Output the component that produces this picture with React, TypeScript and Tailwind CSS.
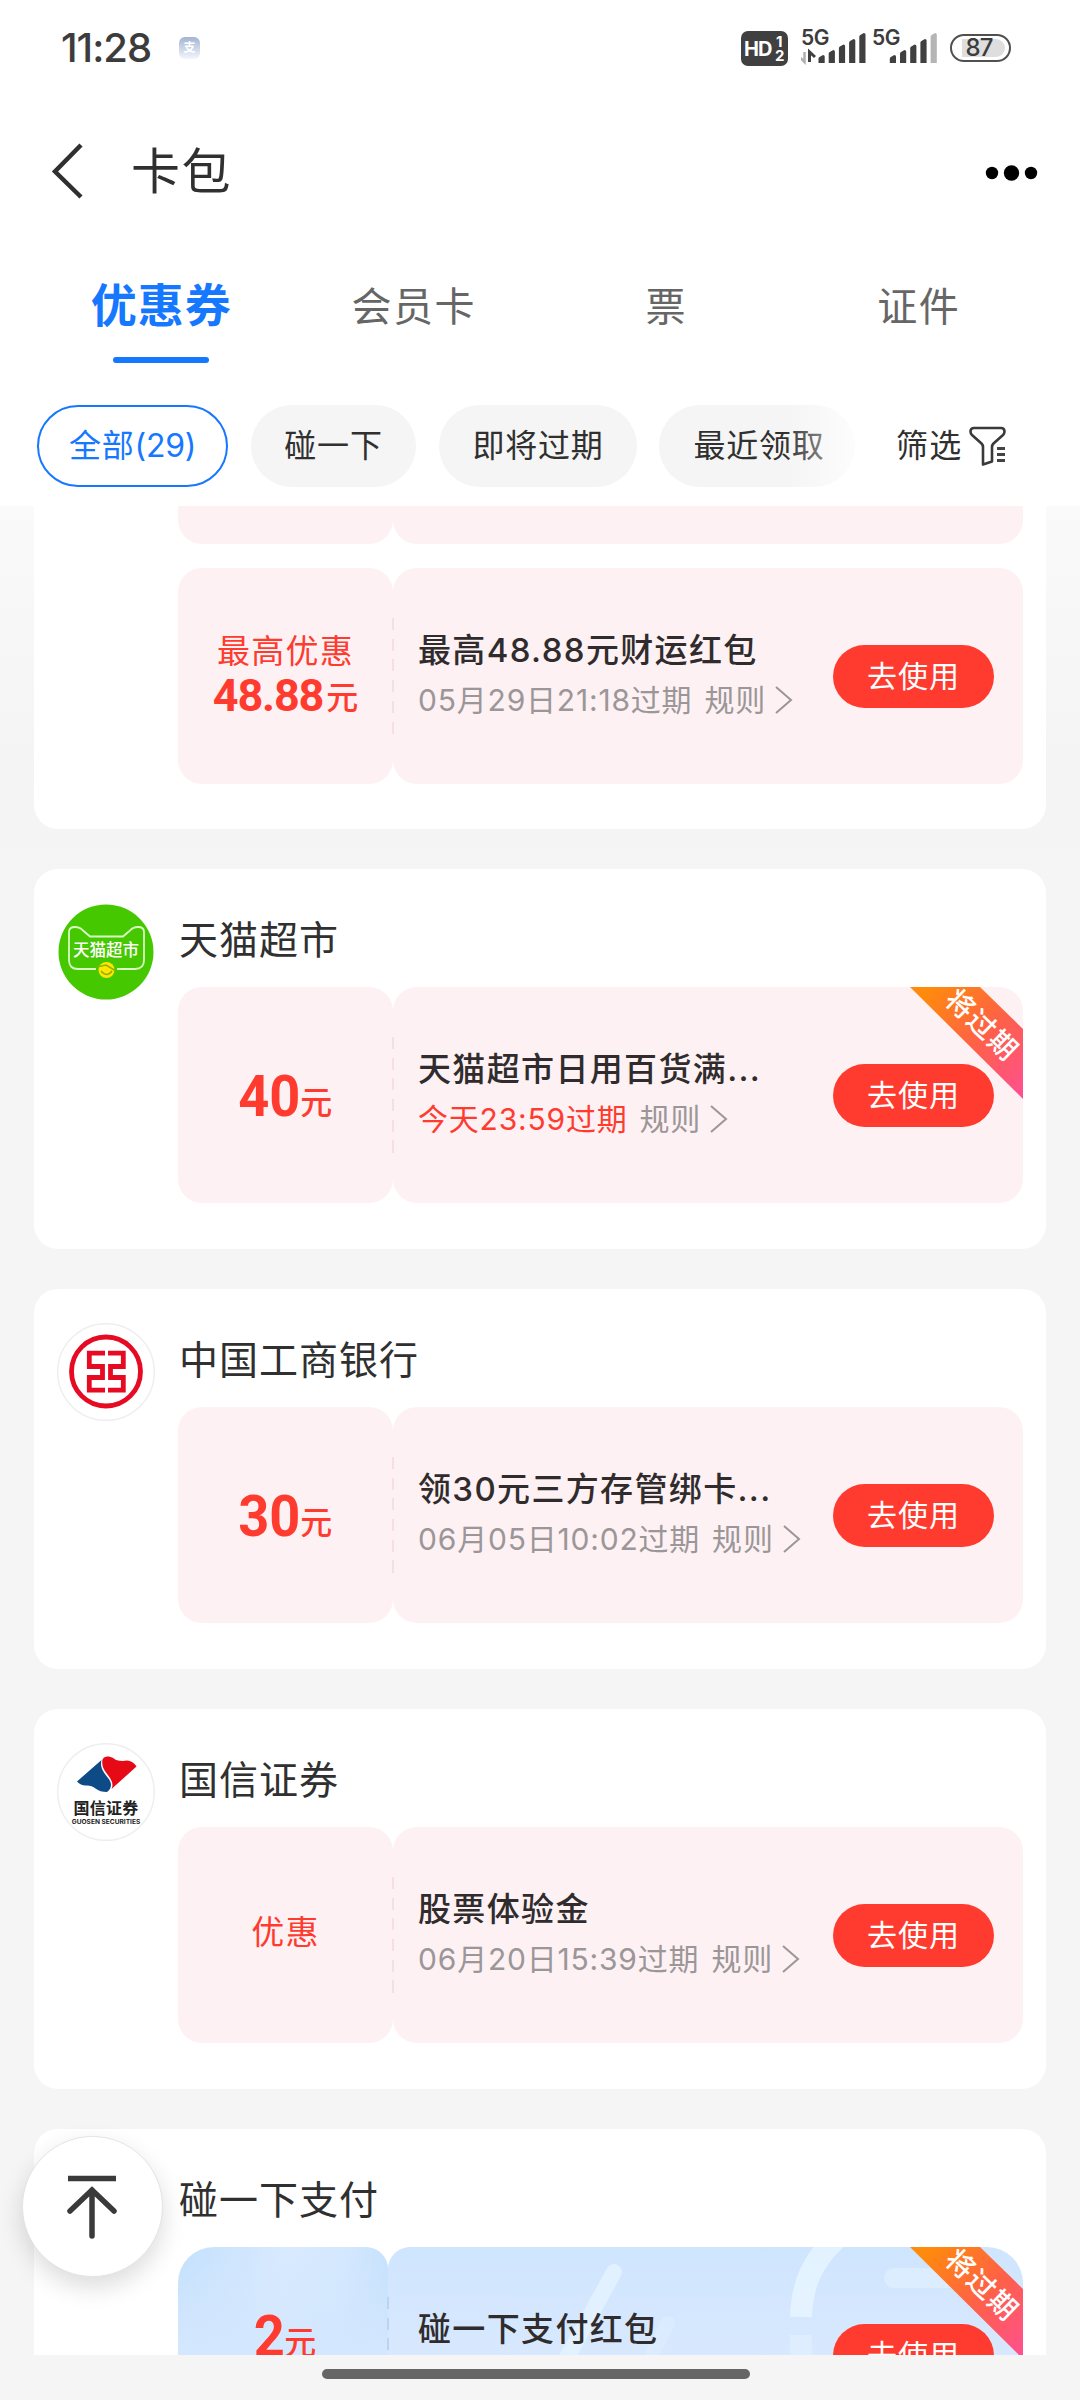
import React from "react";

const FONT = "font-['Inter','Noto_Sans_CJK_SC',sans-serif]";

type Coupon = {
  amount?: string;
  label?: string;
  title: string;
  expire: string;
  urgent?: boolean;
  ribbon?: boolean;
  blue?: boolean;
};

function SignalBars({ x, dimLast }: { x: number; dimLast?: boolean }) {
  const tops = [55, 50, 44.5, 39, 33];
  return (
    <g>
      {tops.map((t, i) => (
        <path
          key={t}
          d={`M${x + i * 10.2} 63V${t + 3.5}Q${x + i * 10.2} ${t + 2.5} ${x + i * 10.2 + 1} ${t + 2}L${x + i * 10.2 + 4.5} ${t}Q${x + i * 10.2 + 6.2} ${t} ${x + i * 10.2 + 6.2} ${t + 1.5}V63Z`}
          fill={dimLast && i === 4 ? "#b5b5b5" : "#404040"}
        />
      ))}
    </g>
  );
}

function StatusBar() {
  return (
    <div className="flex h-24 items-center pl-[61px] pr-[69px] text-[#3c3c3c]">
      <span className="w-[118px] text-[40px] font-medium leading-none tracking-[-1px]">11:28</span>
      <span className="flex h-[22px] w-[21px] items-center justify-center rounded-[6px] bg-linear-to-b from-[#a3b4d2] to-[#f3f7fd] text-[12px] font-bold leading-none text-white">
        支
      </span>
      <span className="relative ml-auto h-[35px] w-[47px] rounded-[7px] bg-[#404040] font-bold leading-none text-white">
        <span className="absolute left-[3px] top-[8px] text-[20px] tracking-[-1px]">HD</span>
        <span className="absolute left-[35px] top-[3px] text-[15px]">1</span>
        <span className="absolute left-[34px] top-[17px] text-[15px]">2</span>
      </span>
      <div className="relative ml-[13px] h-24 w-[136px]">
        <span className="absolute left-0 top-[27px] text-[21px] font-semibold leading-none tracking-[-0.5px]">5G</span>
        <span className="absolute left-[71px] top-[27px] text-[21px] font-semibold leading-none tracking-[-0.5px]">5G</span>
        <svg className="absolute left-0 top-0" width="136" height="96" viewBox="801 0 136 96">
          <path d="M804.5 52V62L800.500 58" stroke="#b0b0b0" strokeWidth="2.500" fill="none" />
          <path d="M809.5 62V52L815 57" stroke="#404040" strokeWidth="3" fill="none" />
          <SignalBars x={818.5} />
          <SignalBars x={889.8} dimLast />
        </svg>
      </div>
      <div className="relative ml-[13px] flex h-[28px] w-[61px] items-center justify-center overflow-hidden rounded-full border-2 border-[#505050]">
        <span className="absolute left-[10px] top-[3px] h-[18px] w-[43px] rounded-r-[9px] bg-[#dedede]" />
        <span className="relative mr-[3px] text-[24px] font-medium leading-none tracking-[-1px]">87</span>
      </div>
    </div>
  );
}

function NavBar() {
  return (
    <div className="flex h-[150px] items-center pl-[51px] pr-[41px]">
      <svg width="34" height="56" viewBox="0 0 34 56" fill="none">
        <path d="M30 2L4 28.500L30 54" stroke="#303030" strokeWidth="4.500" />
      </svg>
      <h1 className="ml-[46px] text-[49px] leading-none tracking-[1.500px] text-[#303030]">卡包</h1>
      <svg className="ml-auto mt-[3px]" width="54" height="16" viewBox="0 0 54 16">
        <circle cx="7" cy="8" r="6.200" />
        <circle cx="26.500" cy="8" r="7.700" />
        <circle cx="46" cy="8" r="6.200" />
      </svg>
    </div>
  );
}

function Tabs() {
  return (
    <div className="flex h-[147px] px-[35px] text-[40px] leading-none text-[#666]">
      <div className="flex flex-1 flex-col items-center pt-[36px]">
        <span className="text-[46px] font-bold tracking-[1px] text-[#1677ff]">优惠券</span>
        <span className="mt-[29px] h-[6px] w-24 rounded-full bg-[#1677ff]" />
      </div>
      {["会员卡", "票", "证件"].map((t) => (
        <div key={t} className="flex-1 pt-[41px] text-center tracking-[1.500px]">
          {t}
        </div>
      ))}
    </div>
  );
}

function Filters() {
  const chip = "flex h-[82px] shrink-0 items-center justify-center rounded-full pb-px tracking-[0.800px]";
  return (
    <div className="relative flex h-[113px] items-start pl-[37px] pt-[12px] text-[32px] leading-none text-[#303030]">
      <div className={`${chip} w-[191px] border-[2.500px] border-[#1677ff] text-[#1677ff]`}>
        <span>
          全部<span className="tracking-[-0.300px]">(29)</span>
        </span>
      </div>
      <div className={`${chip} ml-[23px] w-[165px] bg-[#f5f5f5]`}>碰一下</div>
      <div className={`${chip} ml-[23px] w-[198px] bg-[#f5f5f5]`}>即将过期</div>
      <div className={`${chip} ml-[22px] w-[196px] bg-[#f5f5f5]`}>
        <span className="ml-[4px]">最近领取</span>
      </div>
      <div className="absolute left-[785px] top-[10px] h-[86px] w-[74px] bg-linear-to-r from-white/0 to-white/80" />
      <div className="ml-[41px] flex h-[82px] items-center pb-px tracking-[1.200px]">
        <span>筛选</span>
        <svg className="ml-[7px]" width="38" height="42" viewBox="0 0 38 42" fill="none">
          <path
            d="M5 3H32Q35.500 3 35.500 6.500Q35.500 8.500 34 10L24.500 18.500Q23 20 23 22V36.500L14 39.500V22Q14 20 12.500 18.500L3 10Q1.500 8.500 1.500 6.500Q1.500 3 5 3Z"
            stroke="#3a3a3a"
            strokeWidth="2.600"
            strokeLinejoin="round"
          />
          <path d="M28 23.500H36M28 29.500H36M28 35.500H36" stroke="#444" strokeWidth="2.800" />
        </svg>
      </div>
    </div>
  );
}

function Ribbon() {
  return (
    <div className="absolute right-0 top-0 h-[112px] w-[113px] overflow-hidden">
      <svg className="absolute inset-0" width="113" height="112" viewBox="0 0 113 112">
        <defs>
          <linearGradient id="ribbon" x1="0" y1="0" x2="1" y2="1">
            <stop offset="0.1" stopColor="#ff8a0c" />
            <stop offset="0.550" stopColor="#fe6048" />
            <stop offset="1" stopColor="#ff4f92" />
          </linearGradient>
        </defs>
        <path d="M0 0H70L113 42V112Z" fill="url(#ribbon)" />
      </svg>
      <span className="absolute left-[22px] top-[22px] w-[100px] rotate-[44deg] text-center text-[28px] font-medium leading-[32px] tracking-[1.500px] text-white">
        将过期
      </span>
    </div>
  );
}

function BlueDecor() {
  return (
    <svg className="absolute inset-0" width="635" height="216" viewBox="388 0 635 216" fill="none">
      <g stroke="#e6f4ff" strokeOpacity="0.850" strokeLinecap="round">
        <path d="M614 25L564 116" strokeWidth="16" strokeOpacity="0.750" />
        <path d="M668 76L650 112" strokeWidth="14" strokeOpacity="0.350" />
        <path d="M836 -8C812 14 802 38 801 70" strokeWidth="22" strokeLinecap="butt" />
        <path d="M801 88V140" strokeWidth="22" strokeLinecap="butt" strokeOpacity="0.500" />
        <path d="M894 31H960" strokeWidth="20" strokeOpacity="0.500" />
      </g>
    </svg>
  );
}

function Yuan() {
  return <span className="relative -top-[2px] text-[32px] font-medium">元</span>;
}

function CouponRow({ c }: { c: Coupon }) {
  return (
    <div className="relative flex h-[216px] w-[845px]">
      <div
        className={
          c.blue
            ? "flex w-[210px] flex-col items-center rounded-l-[36px] rounded-r-[22px] bg-[linear-gradient(180deg,transparent,#d3e7fe_45%),linear-gradient(100deg,#c3e0fd,#d9eafe_45%,#d3e7fe_70%,#b9dcfd)] pl-[2px] pt-[60px] text-[#ff3b30]"
            : "flex w-[215px] flex-col items-center justify-center rounded-[24px] bg-[#fdf1f3] text-[#ff3b30]"
        }
      >
        {c.label && c.amount && (
          <>
            <span className="mt-[7px] text-[33px] leading-[40px] tracking-[1.300px]">{c.label}</span>
            <span className="mt-[2px] flex items-baseline leading-[46px]">
              <span className="font-['Roboto'] text-[45px] font-bold tracking-[-1.200px]">{c.amount}</span>
              <span className="ml-[3px]">
                <Yuan />
              </span>
            </span>
          </>
        )}
        {c.label && !c.amount && (
          <span className="mt-[-7px] text-[33px] leading-[40px] tracking-[1.300px]">{c.label}</span>
        )}
        {!c.label && (
          <span className={`flex items-baseline leading-[60px] ${c.blue ? "" : "mt-[11px] pr-[4px]"}`}>
            <span className="origin-right scale-x-[0.95] font-['Roboto'] text-[57px] font-bold">{c.amount}</span>
            <Yuan />
          </span>
        )}
      </div>
      <div
        className={
          c.blue
            ? "relative flex-1 overflow-hidden rounded-l-[22px] rounded-r-[36px] bg-[linear-gradient(180deg,#cfe5fe,#d9e9fe_55%)]"
            : "relative flex-1 overflow-hidden rounded-[24px] bg-[#fdf1f3]"
        }
      >
        {c.blue && <BlueDecor />}
        <div className={`relative flex h-full items-center ${c.blue ? "pl-[30px]" : "pl-[25px]"}`}>
          <div className="mb-[3px] flex flex-col whitespace-nowrap">
            <div className="text-[33px] font-medium leading-[50px] tracking-[1.350px] text-[#302c2d]">{c.title}</div>
            <div className="flex items-center text-[30px] leading-[50px] tracking-[0.800px] text-[#9b9697]">
              <span className={c.urgent ? "text-[#ff3b30]" : ""}>{c.expire}</span>
              <span className="ml-[12px]">规则</span>
              <svg className="ml-[8px]" width="20" height="30" viewBox="0 0 20 30" fill="none">
                <path d="M2 2L17 15L2 28" stroke="#9b9697" strokeWidth="2" />
              </svg>
            </div>
          </div>
        </div>
        <button className="absolute right-[29px] top-[77px] h-[63px] w-[161px] rounded-full bg-[#ff3b30] pb-[2px] text-[30px] leading-none tracking-[1px] text-white">
          去使用
        </button>
        {c.ribbon && <Ribbon />}
      </div>
      <div
        className={`absolute top-[50px] h-[116px] w-[2px] ${
          c.blue
            ? "left-[209px] bg-[repeating-linear-gradient(180deg,#bdd3ee_0_12px,transparent_12px_20.700px)]"
            : "left-[214px] bg-[repeating-linear-gradient(180deg,#f6dfe3_0_12px,transparent_12px_20.700px)]"
        }`}
      />
    </div>
  );
}

function TmallLogo() {
  return (
    <div className="relative h-[98px] w-[98px]">
      <svg width="98" height="98" viewBox="0 0 98 98" fill="none">
        <circle cx="49" cy="49" r="47.500" fill="#46c800" />
        <path
          d="M39 66H21Q12 66 12 57V29Q12 24 18 24Q23 24 26 27.500L33 33.500H66L73 27.500Q76 24 81 24Q87 24 87 29V57Q87 66 78 66H60"
          stroke="#d9fbc4"
          strokeWidth="1.800"
        />
        <circle cx="49.500" cy="67" r="8" fill="#ffe600" />
        <path d="M40 64L49 62L59 68M44 68Q50 75 55 68" stroke="#8fb000" strokeWidth="1.500" />
      </svg>
      <span className="absolute left-0 top-[38px] w-full text-center text-[16.500px] font-medium leading-[18px] text-white">天猫超市</span>
    </div>
  );
}

function IcbcLogo() {
  return (
    <svg width="98" height="98" viewBox="0 0 98 98" fill="none">
      <circle cx="49" cy="49" r="48.300" stroke="#eeeeee" strokeWidth="1.400" />
      <g stroke="#e60a23">
        <circle cx="49" cy="48.500" r="34.500" strokeWidth="4.800" />
        <path d="M48 30.200H32.300V43.500H45.500V54.500H32.300V67.200H48" strokeWidth="4.800" />
        <path d="M51 30.200H66.300V43.500H53.500V54.500H66.300V67.200H51" strokeWidth="4.800" />
      </g>
    </svg>
  );
}

function GuosenLogo() {
  return (
    <div className="relative h-[98px] w-[98px] text-center text-[#222]">
      <svg width="98" height="98" viewBox="0 0 98 98" fill="none">
        <circle cx="49" cy="49" r="48.300" stroke="#eeeeee" strokeWidth="1.400" />
        <path d="M44.500 17L20 38.500Q24 43 30 42.500Q35 42.500 38.500 45.500Q43 49 50 49Q56 44 53 38C50 32 42 27 44.500 17Z" fill="#0d4a86" />
        <path d="M45.500 16.500Q47 13 52 13.500Q56 14 59 17Q65 18.500 70 17.500Q76 18 79.500 23.500L54.500 46Q57 41 53 35C49 29 44 25 45.500 16.500Z" fill="#e60a17" />
      </svg>
      <span className="absolute left-0 top-[56px] w-full text-[16px] font-bold leading-[18px] tracking-[0.300px]">国信证券</span>
      <span className="absolute left-0 top-[75px] w-full whitespace-nowrap text-[6.600px] font-bold leading-[8px]">GUOSEN SECURITIES</span>
    </div>
  );
}

function Card({ name, logo, coupon }: { name: string; logo?: React.ReactNode; coupon: Coupon }) {
  return (
    <section className="flex h-[380px] shrink-0 rounded-[24px] bg-white pl-[23px] pt-[34px]">
      <div className="w-[98px]">{logo}</div>
      <div className="ml-[23px]">
        <h2 className="ml-[1px] h-[84px] pt-[17px] text-[39px] leading-[40px] tracking-[1px] text-[#303030]">{name}</h2>
        <CouponRow c={coupon} />
      </div>
    </section>
  );
}

export default function App() {
  return (
    <div className={`relative flex h-[2400px] w-[1080px] flex-col overflow-hidden bg-[#f5f5f5] ${FONT}`}>
      <header className="h-[506px] shrink-0 bg-white">
        <StatusBar />
        <NavBar />
        <Tabs />
        <Filters />
      </header>

      <main className="flex h-[1849px] shrink-0 flex-col gap-10 overflow-hidden bg-[linear-gradient(180deg,#fafafa,#f4f4f4_260px,#f5f5f5_400px)] px-[34px]">
        <section className="h-[323px] shrink-0 rounded-b-[24px] bg-white pl-[144px]">
          <div className="mb-6 flex h-[38px] w-[845px]">
            <div className="w-[215px] rounded-b-[24px] bg-[#fdf1f3]" />
            <div className="flex-1 rounded-b-[24px] bg-[#fdf1f3]" />
          </div>
          <CouponRow c={{ label: "最高优惠", amount: "48.88", title: "最高48.88元财运红包", expire: "05月29日21:18过期" }} />
        </section>
        <Card name="天猫超市" logo={<TmallLogo />} coupon={{ amount: "40", title: "天猫超市日用百货满...", expire: "今天23:59过期", urgent: true, ribbon: true }} />
        <Card name="中国工商银行" logo={<IcbcLogo />} coupon={{ amount: "30", title: "领30元三方存管绑卡...", expire: "06月05日10:02过期" }} />
        <Card name="国信证券" logo={<GuosenLogo />} coupon={{ label: "优惠", title: "股票体验金", expire: "06月20日15:39过期" }} />
        <Card name="碰一下支付" coupon={{ amount: "2", title: "碰一下支付红包", expire: "今天23:59过期", urgent: true, ribbon: true, blue: true }} />
      </main>

      <footer className="flex justify-center pr-[8px] pt-[14px]">
        <div className="h-[10px] w-[428px] rounded-full bg-[#666]" />
      </footer>

      <button className="absolute left-[22px] top-[2136px] flex h-[141px] w-[141px] items-center justify-center rounded-full border border-[#e4e4e4] bg-white shadow-[0_10px_24px_rgba(0,0,0,0.14)]">
        <svg className="mb-[3px] mr-[2px]" width="60" height="70" viewBox="0 0 60 70" fill="none" stroke="#3a3a3a" strokeWidth="5.500">
          <path d="M6 8.500H54" />
          <path d="M30 20V66M8 41L30 20L52 41" strokeLinecap="round" />
        </svg>
      </button>
    </div>
  );
}
